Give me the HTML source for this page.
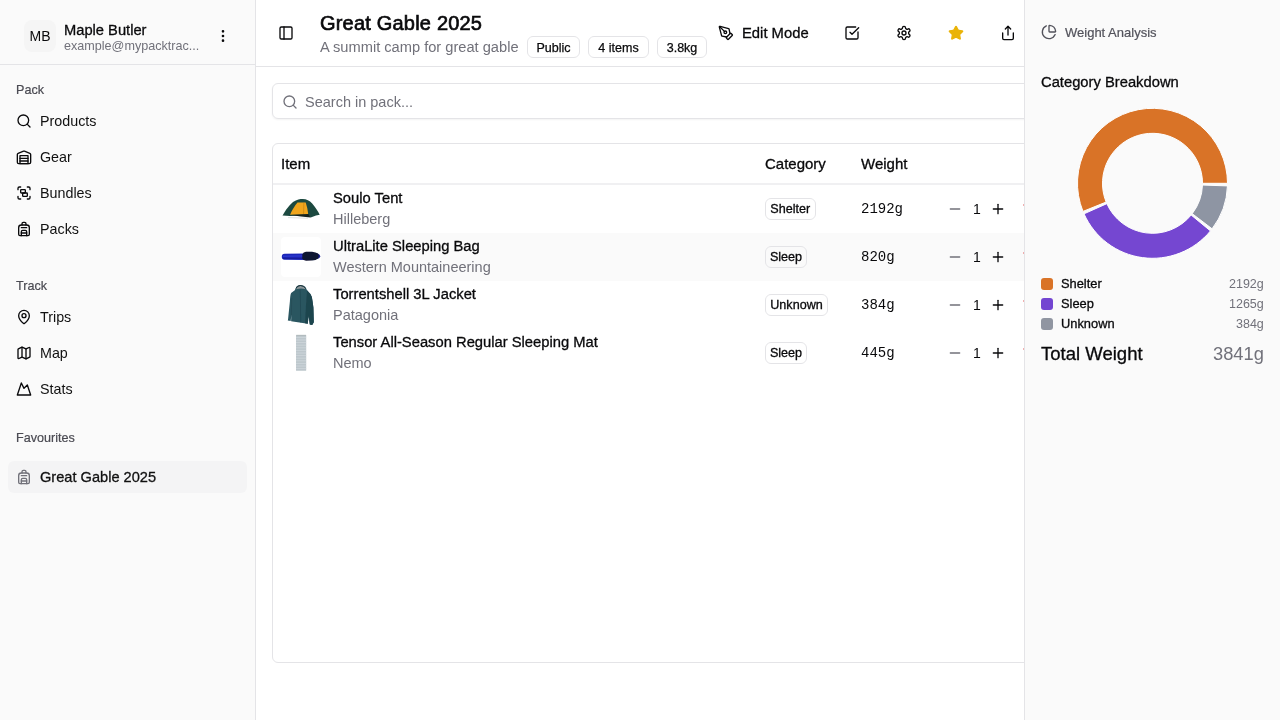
<!DOCTYPE html>
<html><head><meta charset="utf-8">
<style>
*{box-sizing:border-box;margin:0;padding:0}
html,body{width:1280px;height:720px;overflow:hidden;background:#fff;font-family:"Liberation Sans",sans-serif;color:#09090b}
.abs{position:absolute}
#sb{position:absolute;left:0;top:0;width:256px;height:720px;background:#fafafa;border-right:1px solid #e4e4e7}
#sbh{position:absolute;left:0;top:0;width:255px;height:65px;border-bottom:1px solid #e4e4e7}
.av{will-change:transform;position:absolute;left:24px;top:20px;width:32px;height:32px;border-radius:8px;background:#f5f5f5;font-size:14px;line-height:32px;text-align:center;color:#09090b}
.t{position:absolute;white-space:nowrap;line-height:1;will-change:transform}
.lbl{font-size:12.6px;color:#4a4a52;-webkit-text-stroke:0.2px currentColor}
.nav{font-size:14.3px;color:#111}
.ic{position:absolute;width:16px;height:16px;fill:none;stroke:#09090b;stroke-width:2;stroke-linecap:round;stroke-linejoin:round}
#main{position:absolute;left:256px;top:0;width:768px;height:720px;background:#fff;overflow:hidden}
#hdr{position:absolute;left:0;top:0;width:768px;height:67px;border-bottom:1px solid #e4e4e7}
.badge{will-change:transform;position:absolute;top:36px;height:22px;border:1px solid #e4e4e7;border-radius:6px;font-size:12.5px;line-height:22.5px;text-align:center;color:#09090b;background:#fff;-webkit-text-stroke:0.25px currentColor}
#rp{position:absolute;left:1024px;top:0;width:256px;height:720px;background:#fafafa;border-left:1px solid #e4e4e7}
.row{position:absolute;left:1px;width:780px;height:48px}
.cat{will-change:transform;position:absolute;height:22px;border:1px solid #e4e4e7;border-radius:6px;font-size:12.6px;line-height:20px;text-align:center;top:13px}
.mono{font-family:"Liberation Mono",monospace}
.muted{color:#71717a}
.med{-webkit-text-stroke:0.3px currentColor}
.th{font-size:15px}
</style></head><body>
<svg width="0" height="0" style="position:absolute"><defs><filter id="bl" x="-10%" y="-10%" width="120%" height="120%"><feGaussianBlur stdDeviation="0.5"/></filter></defs></svg>
<div id="sb">
 <div id="sbh">
  <div class="av">MB</div>
  <div class="t med" id="nm" style="left:64px;top:22.6px;font-size:14.7px;font-weight:400;color:#09090b">Maple Butler</div>
  <div class="t muted" id="em" style="left:64px;top:40px;font-size:12.6px">example@mypacktrac...</div>
  <svg class="ic" style="left:215px;top:28px" viewBox="0 0 24 24"><circle cx="12" cy="5" r="1"/><circle cx="12" cy="12" r="1"/><circle cx="12" cy="19" r="1"/></svg>
 </div>
 <div class="t lbl" style="left:16px;top:84px">Pack</div>
 <div class="t lbl" style="left:16px;top:280px">Track</div>
 <div class="t lbl" style="left:16px;top:432px">Favourites</div>
<svg class="ic" style="left:16px;top:113px" viewBox="0 0 24 24"><circle cx="11" cy="11" r="8"/><path d="m21 21-4.3-4.3"/></svg><div class="t nav" style="left:40px;top:114px">Products</div>
<svg class="ic" style="left:16px;top:149px" viewBox="0 0 24 24"><path d="M22 8.35V20a2 2 0 0 1-2 2H4a2 2 0 0 1-2-2V8.35A2 2 0 0 1 3.26 6.5l8-3.2a2 2 0 0 1 1.48 0l8 3.2A2 2 0 0 1 22 8.35Z"/><path d="M6 18h12"/><path d="M6 14h12"/><rect width="12" height="12" x="6" y="10"/></svg><div class="t nav" style="left:40px;top:150px">Gear</div>
<svg class="ic" style="left:16px;top:185px" viewBox="0 0 24 24"><path d="M3 7V5c0-1.1.9-2 2-2h2"/><path d="M17 3h2c1.1 0 2 .9 2 2v2"/><path d="M21 17v2c0 1.1-.9 2-2 2h-2"/><path d="M7 21H5c-1.1 0-2-.9-2-2v-2"/><rect width="7" height="5" x="7" y="7" rx="1"/><rect width="7" height="5" x="10" y="12" rx="1"/></svg><div class="t nav" style="left:40px;top:186px">Bundles</div>
<svg class="ic" style="left:16px;top:221px" viewBox="0 0 24 24"><path d="M4 10a4 4 0 0 1 4-4h8a4 4 0 0 1 4 4v10a2 2 0 0 1-2 2H6a2 2 0 0 1-2-2z"/><path d="M8 10h8"/><path d="M8 18h8"/><path d="M8 22v-6a2 2 0 0 1 2-2h4a2 2 0 0 1 2 2v6"/><path d="M9 6V4a2 2 0 0 1 2-2h2a2 2 0 0 1 2 2v2"/></svg><div class="t nav" style="left:40px;top:222px">Packs</div>
<svg class="ic" style="left:16px;top:309px" viewBox="0 0 24 24"><path d="M20 10c0 4.993-5.539 10.193-7.399 11.799a1 1 0 0 1-1.202 0C9.539 20.193 4 14.993 4 10a8 8 0 0 1 16 0"/><circle cx="12" cy="10" r="3"/></svg><div class="t nav" style="left:40px;top:310px">Trips</div>
<svg class="ic" style="left:16px;top:345px" viewBox="0 0 24 24"><path d="M14.106 5.553a2 2 0 0 0 1.788 0l3.659-1.83A1 1 0 0 1 21 4.619v12.764a1 1 0 0 1-.553.894l-4.553 2.277a2 2 0 0 1-1.788 0l-4.212-2.106a2 2 0 0 0-1.788 0l-3.659 1.83A1 1 0 0 1 3 19.381V6.618a1 1 0 0 1 .553-.894l4.553-2.277a2 2 0 0 1 1.788 0z"/><path d="M15 5.764v15"/><path d="M9 3.236v15"/></svg><div class="t nav" style="left:40px;top:346px">Map</div>
<svg class="ic" style="left:16px;top:381px" viewBox="0 0 24 24"><path d="m8 3 4 8 5-5 5 15H2L8 3z"/></svg><div class="t nav" style="left:40px;top:382px">Stats</div>
<div class="abs" style="left:8px;top:461px;width:239px;height:32px;border-radius:6px;background:#f4f4f5"></div>
<svg class="ic" style="left:16px;top:469px;stroke:#71717a" viewBox="0 0 24 24"><path d="M4 10a4 4 0 0 1 4-4h8a4 4 0 0 1 4 4v10a2 2 0 0 1-2 2H6a2 2 0 0 1-2-2z"/><path d="M8 10h8"/><path d="M8 18h8"/><path d="M8 22v-6a2 2 0 0 1 2-2h4a2 2 0 0 1 2 2v6"/><path d="M9 6V4a2 2 0 0 1 2-2h2a2 2 0 0 1 2 2v2"/></svg><div class="t nav med" style="left:40px;top:470px;font-size:14.6px">Great Gable 2025</div>
</div>
<div id="main">
 <div id="hdr"><svg class="ic" style="left:22px;top:25px" viewBox="0 0 24 24"><rect width="18" height="18" x="3" y="3" rx="2"/><path d="M9 3v18"/></svg><div class="t" id="title" style="left:64.3px;top:13px;font-size:20px;font-weight:400;letter-spacing:0.2px;-webkit-text-stroke:0.65px currentColor">Great Gable 2025</div><div class="t muted" id="sub" style="left:64px;top:40px;font-size:14.65px">A summit camp for great gable</div><div class="badge" style="left:271px;width:53px">Public</div><div class="badge" style="left:332px;width:61px">4 items</div><div class="badge" style="left:401px;width:50px">3.8kg</div><svg class="ic" style="left:462px;top:25px" viewBox="0 0 24 24"><path d="M15.707 21.293a1 1 0 0 1-1.414 0l-1.586-1.586a1 1 0 0 1 0-1.414l5.586-5.586a1 1 0 0 1 1.414 0l1.586 1.586a1 1 0 0 1 0 1.414z"/><path d="m18 13-1.375-6.874a1 1 0 0 0-.746-.776L3.235 2.028a1 1 0 0 0-1.207 1.207L5.35 15.879a1 1 0 0 0 .776.746L13 18"/><path d="m2.3 2.3 7.286 7.286"/><circle cx="11" cy="11" r="2"/></svg><div class="t med" id="edit" style="left:485.5px;top:26px;font-size:14.8px">Edit Mode</div><svg class="ic" style="left:588px;top:25px" viewBox="0 0 24 24"><path d="M21 10.5V19a2 2 0 0 1-2 2H5a2 2 0 0 1-2-2V5a2 2 0 0 1 2-2h12.5"/><path d="m9 11 3 3L22 4"/></svg><svg class="ic" style="left:640px;top:25px" viewBox="0 0 24 24"><path d="M12.22 2h-.44a2 2 0 0 0-2 2v.18a2 2 0 0 1-1 1.73l-.43.25a2 2 0 0 1-2 0l-.15-.08a2 2 0 0 0-2.73.73l-.22.38a2 2 0 0 0 .73 2.73l.15.1a2 2 0 0 1 1 1.72v.51a2 2 0 0 1-1 1.74l-.15.09a2 2 0 0 0-.73 2.73l.22.38a2 2 0 0 0 2.73.73l.15-.08a2 2 0 0 1 2 0l.43.25a2 2 0 0 1 1 1.73V20a2 2 0 0 0 2 2h.44a2 2 0 0 0 2-2v-.18a2 2 0 0 1 1-1.73l.43-.25a2 2 0 0 1 2 0l.15.08a2 2 0 0 0 2.73-.73l.22-.39a2 2 0 0 0-.73-2.73l-.15-.08a2 2 0 0 1-1-1.74v-.5a2 2 0 0 1 1-1.74l.15-.09a2 2 0 0 0 .73-2.73l-.22-.38a2 2 0 0 0-2.73-.73l-.15.08a2 2 0 0 1-2 0l-.43-.25a2 2 0 0 1-1-1.73V4a2 2 0 0 0-2-2z"/><circle cx="12" cy="12" r="3"/></svg><svg class="ic" style="left:692px;top:25px;stroke:#eab308;fill:#eab308" viewBox="0 0 24 24"><path d="M11.525 2.295a.53.53 0 0 1 .95 0l2.31 4.679a2.123 2.123 0 0 0 1.595 1.16l5.166.756a.53.53 0 0 1 .294.904l-3.736 3.638a2.123 2.123 0 0 0-.611 1.878l.882 5.14a.53.53 0 0 1-.771.56l-4.618-2.428a2.122 2.122 0 0 0-1.973 0L6.396 21.01a.53.53 0 0 1-.77-.56l.881-5.139a2.122 2.122 0 0 0-.611-1.879L2.16 9.795a.53.53 0 0 1 .294-.906l5.165-.755a2.122 2.122 0 0 0 1.597-1.16z"/></svg><svg class="ic" style="left:744px;top:25px" viewBox="0 0 24 24"><path d="M4 12v8a2 2 0 0 0 2 2h12a2 2 0 0 0 2-2v-8"/><polyline points="16 6 12 2 8 6"/><line x1="12" x2="12" y1="2" y2="15"/></svg></div>
<div class="abs" style="left:16px;top:83px;width:780px;height:36px;border:1px solid #e4e4e7;border-radius:6px;box-shadow:0 1px 2px rgba(0,0,0,.05)"></div><svg class="ic" style="left:26px;top:93.5px;stroke:#71717a" viewBox="0 0 24 24"><circle cx="11" cy="11" r="8"/><path d="m21 21-4.3-4.3"/></svg><div class="t muted" style="left:49px;top:95px;font-size:14.5px">Search in pack...</div><div id="tbl" class="abs" style="left:16px;top:143px;width:790px;height:520px;border:1px solid #e4e4e7;border-radius:6px"><div class="abs" style="left:0;top:39px;width:790px;height:2px;background:#f0f0f2"></div><div class="t med th" style="left:8.3px;top:12px">Item</div><div class="t med th" style="left:492px;top:12px">Category</div><div class="t med th" style="left:588px;top:12px">Weight</div><div class="row" style="left:0;top:40.5px"><div class="abs img" id="img0" style="left:8px;top:4px;width:40px;height:40px"><svg width="40" height="40" viewBox="0 0 40 40"><g filter="url(#bl)">
<path d="M7 28.6L27 29.2" stroke="#dadcda" stroke-width="0.9" fill="none"/>
<path d="M1.5 26.6C3 24 7 17 12 13C16 10.3 19 10 21.8 10C25.5 10 28.6 11.6 31.2 14.6C34.5 18.5 37.3 23 38.7 25.8L35 26.6L29.7 28.4L27.3 26L9 27Z" fill="#1d4a40"/>
<path d="M9.1 25.8Q10.5 22 12.3 19.5Q14.5 15.5 16.5 13.4L24.7 13.4Q26.3 18 27.1 24.2L27.1 25.6Z" fill="#f0a51d"/>
<path d="M22.9 13.6L22.6 25.2" stroke="#b97c14" stroke-width="0.6" fill="none"/>
<path d="M9 26L27.3 25L29.7 28.4L20 27.4Z" fill="#13211f"/>
</g></svg></div><div class="t med" style="left:60px;top:6px;font-size:14.75px">Soulo Tent</div><div class="t muted" style="left:60px;top:27px;font-size:14.5px">Hilleberg</div><div class="cat med" style="left:492px;width:50.5px">Shelter</div><div class="t mono" style="left:588px;top:17px;font-size:14px">2192g</div><svg class="ic" style="left:674px;top:16px;stroke:#71717a" viewBox="0 0 24 24"><path d="M5 12h14"/></svg><div class="t" style="left:699.8px;top:17px;font-size:14px">1</div><svg class="ic" style="left:717px;top:16px" viewBox="0 0 24 24"><path d="M5 12h14"/><path d="M12 5v14"/></svg><svg class="ic" style="left:748.8px;top:16px;stroke:#dc2626" viewBox="0 0 24 24"><path d="M3 6h18"/><path d="M19 6v14c0 1-1 2-2 2H7c-1 0-2-1-2-2V6"/><path d="M8 6V4c0-1 1-2 2-2h4c1 0 2 1 2 2v2"/></svg></div><div class="row" style="left:0;top:88.5px;background:#fafafa"><div class="abs img" id="img1" style="left:8px;top:4px;width:40px;height:40px"><svg width="40" height="40" viewBox="0 0 40 40"><rect width="40" height="40" rx="4" fill="#fff"/><g filter="url(#bl)">
<path d="M0.8 19.7Q0.8 16.8 3.5 16.7L24 16.6L24 22.9L3.5 22.8Q0.8 22.6 0.8 19.7Z" fill="#1b25b8"/>
<path d="M2 19.2L22 18.9" stroke="#3a48e0" stroke-width="1" fill="none" opacity="0.8"/>
<path d="M2 21.3L22 21.4" stroke="#131a8a" stroke-width="0.9" fill="none" opacity="0.8"/>
<path d="M33 16.3Q39.2 16.3 39.2 19.3Q39.2 22.2 33 22.4Z" fill="#1a2290"/>
<path d="M21.3 17.5Q22.3 15 25 14.8L31 14.7Q35 15.2 37 16.6Q38.3 18.5 37 21.5Q35 23.3 31 23.6L25 23.7Q22.3 23.5 21.3 21.8Z" fill="#0e1330"/>
</g></svg></div><div class="t med" style="left:60px;top:6px;font-size:14.75px">UltraLite Sleeping Bag</div><div class="t muted" style="left:60px;top:27px;font-size:14.5px">Western Mountaineering</div><div class="cat med" style="left:492px;width:42px">Sleep</div><div class="t mono" style="left:588px;top:17px;font-size:14px">820g</div><svg class="ic" style="left:674px;top:16px;stroke:#71717a" viewBox="0 0 24 24"><path d="M5 12h14"/></svg><div class="t" style="left:699.8px;top:17px;font-size:14px">1</div><svg class="ic" style="left:717px;top:16px" viewBox="0 0 24 24"><path d="M5 12h14"/><path d="M12 5v14"/></svg><svg class="ic" style="left:748.8px;top:16px;stroke:#dc2626" viewBox="0 0 24 24"><path d="M3 6h18"/><path d="M19 6v14c0 1-1 2-2 2H7c-1 0-2-1-2-2V6"/><path d="M8 6V4c0-1 1-2 2-2h4c1 0 2 1 2 2v2"/></svg></div><div class="row" style="left:0;top:136.5px"><div class="abs img" id="img2" style="left:8px;top:4px;width:40px;height:40px"><svg width="40" height="40" viewBox="0 0 40 40"><g filter="url(#bl)">
<path d="M14.7 3.2Q15.5 0.4 19.3 0.1Q23.6 0.3 25.1 3.2L26 5.2L29.4 9Q31 11 31.5 16L32.4 22.4L32.8 37.2L31.2 40L28.8 39.4L27.6 31L26.8 38.7L10.1 36.2L10.3 30L9.7 36.1L6.8 35.6L7.1 34L8.9 16.3Q9.2 10 10.1 8.1L13.8 5.3Z" fill="#2a5661"/>
<path d="M26 5.2L29.4 9Q31 11 31.5 16L32.4 22.4L32.8 37.2L31.2 40L28.8 39.4L27.6 31L26.8 38.7L24 38.3L25 20Z" fill="#1f444e"/>
<path d="M15.2 4.3Q16 1.3 19.4 1Q23.2 1.2 24.4 4.2Q20 2.9 15.2 4.3Z" fill="#8d979a"/>
<path d="M15 3.4Q16 0.8 19.3 0.5Q23 0.7 24.6 3.3" stroke="#16262c" stroke-width="0.8" fill="none"/>
<path d="M19.2 4.5L19.8 37.5" stroke="#1f434d" stroke-width="0.6" fill="none"/>
<path d="M10.3 30L10.8 13" stroke="#21474f" stroke-width="0.5" fill="none"/>
</g></svg></div><div class="t med" style="left:60px;top:6px;font-size:14.75px">Torrentshell 3L Jacket</div><div class="t muted" style="left:60px;top:27px;font-size:14.5px">Patagonia</div><div class="cat med" style="left:492px;width:63px">Unknown</div><div class="t mono" style="left:588px;top:17px;font-size:14px">384g</div><svg class="ic" style="left:674px;top:16px;stroke:#71717a" viewBox="0 0 24 24"><path d="M5 12h14"/></svg><div class="t" style="left:699.8px;top:17px;font-size:14px">1</div><svg class="ic" style="left:717px;top:16px" viewBox="0 0 24 24"><path d="M5 12h14"/><path d="M12 5v14"/></svg><svg class="ic" style="left:748.8px;top:16px;stroke:#dc2626" viewBox="0 0 24 24"><path d="M3 6h18"/><path d="M19 6v14c0 1-1 2-2 2H7c-1 0-2-1-2-2V6"/><path d="M8 6V4c0-1 1-2 2-2h4c1 0 2 1 2 2v2"/></svg></div><div class="row" style="left:0;top:184.5px"><div class="abs img" id="img3" style="left:8px;top:4px;width:40px;height:40px"><svg width="40" height="40" viewBox="0 0 40 40"><g filter="url(#bl)">
<rect x="15" y="2" width="10.2" height="35.7" rx="0.5" fill="#bdc7cc"/>
<path d="M15 4.4h10.2M15 7h10.2M15 9.6h10.2M15 12.2h10.2M15 14.8h10.2M15 17.4h10.2M15 20h10.2M15 22.6h10.2M15 25.2h10.2M15 27.8h10.2M15 30.4h10.2M15 33h10.2M15 35.6h10.2" stroke="#d3dbdf" stroke-width="0.7"/>
<path d="M15.2 2.3h9.8" stroke="#a9b1b5" stroke-width="0.7"/>
</g></svg></div><div class="t med" style="left:60px;top:6px;font-size:14.75px">Tensor All-Season Regular Sleeping Mat</div><div class="t muted" style="left:60px;top:27px;font-size:14.5px">Nemo</div><div class="cat med" style="left:492px;width:42px">Sleep</div><div class="t mono" style="left:588px;top:17px;font-size:14px">445g</div><svg class="ic" style="left:674px;top:16px;stroke:#71717a" viewBox="0 0 24 24"><path d="M5 12h14"/></svg><div class="t" style="left:699.8px;top:17px;font-size:14px">1</div><svg class="ic" style="left:717px;top:16px" viewBox="0 0 24 24"><path d="M5 12h14"/><path d="M12 5v14"/></svg><svg class="ic" style="left:748.8px;top:16px;stroke:#dc2626" viewBox="0 0 24 24"><path d="M3 6h18"/><path d="M19 6v14c0 1-1 2-2 2H7c-1 0-2-1-2-2V6"/><path d="M8 6V4c0-1 1-2 2-2h4c1 0 2 1 2 2v2"/></svg></div></div>
</div>
<div id="rp"><svg class="ic" style="left:16px;top:24px;stroke:#52525b" viewBox="0 0 24 24"><path d="M21 12c.552 0 1.005-.449.95-.998a10 10 0 0 0-8.953-8.951c-.55-.055-.998.398-.998.95v8a1 1 0 0 0 1 1z"/><path d="M21.21 15.89A10 10 0 1 1 8 2.83"/></svg><div class="t" style="left:40px;top:26px;font-size:13px;color:#52525b;-webkit-text-stroke:0.2px currentColor">Weight Analysis</div><div class="t med" style="left:16px;top:75px;font-size:14.75px">Category Breakdown</div><svg class="abs" id="donut" style="left:0;top:100px" width="255" height="170" viewBox="0 0 255 170"><path d="M202.50,83.30A75,75,0,1,0,57.97,111.42L81.15,102.05A50,50,0,1,1,177.50,83.30Z" fill="#d97327" stroke="#fff" stroke-width="1"/><path d="M59.00,113.83A75,75,0,0,0,185.46,130.90L166.14,115.03A50,50,0,0,1,81.83,103.65Z" fill="#7547d1" stroke="#fff" stroke-width="1"/><path d="M187.09,128.84A75,75,0,0,0,202.45,85.92L177.47,85.04A50,50,0,0,1,167.23,113.66Z" fill="#8e95a3" stroke="#fff" stroke-width="1"/></svg><div class="abs" style="left:16px;top:278px;width:12px;height:12px;border-radius:3px;background:#d97327"></div><div class="t med" style="left:36.3px;top:278px;font-size:12.85px">Shelter</div><div class="t muted" style="right:16px;top:278px;font-size:12.5px">2192g</div><div class="abs" style="left:16px;top:298px;width:12px;height:12px;border-radius:3px;background:#7345d1"></div><div class="t med" style="left:36.3px;top:298px;font-size:12.85px">Sleep</div><div class="t muted" style="right:16px;top:298px;font-size:12.5px">1265g</div><div class="abs" style="left:16px;top:318px;width:12px;height:12px;border-radius:3px;background:#9095a1"></div><div class="t med" style="left:36.3px;top:318px;font-size:12.85px">Unknown</div><div class="t muted" style="right:16px;top:318px;font-size:12.5px">384g</div><div class="t med" style="left:16.3px;top:345px;font-size:18.55px">Total Weight</div><div class="t muted" style="right:16px;top:345px;font-size:18.3px">3841g</div></div>
</body></html>
